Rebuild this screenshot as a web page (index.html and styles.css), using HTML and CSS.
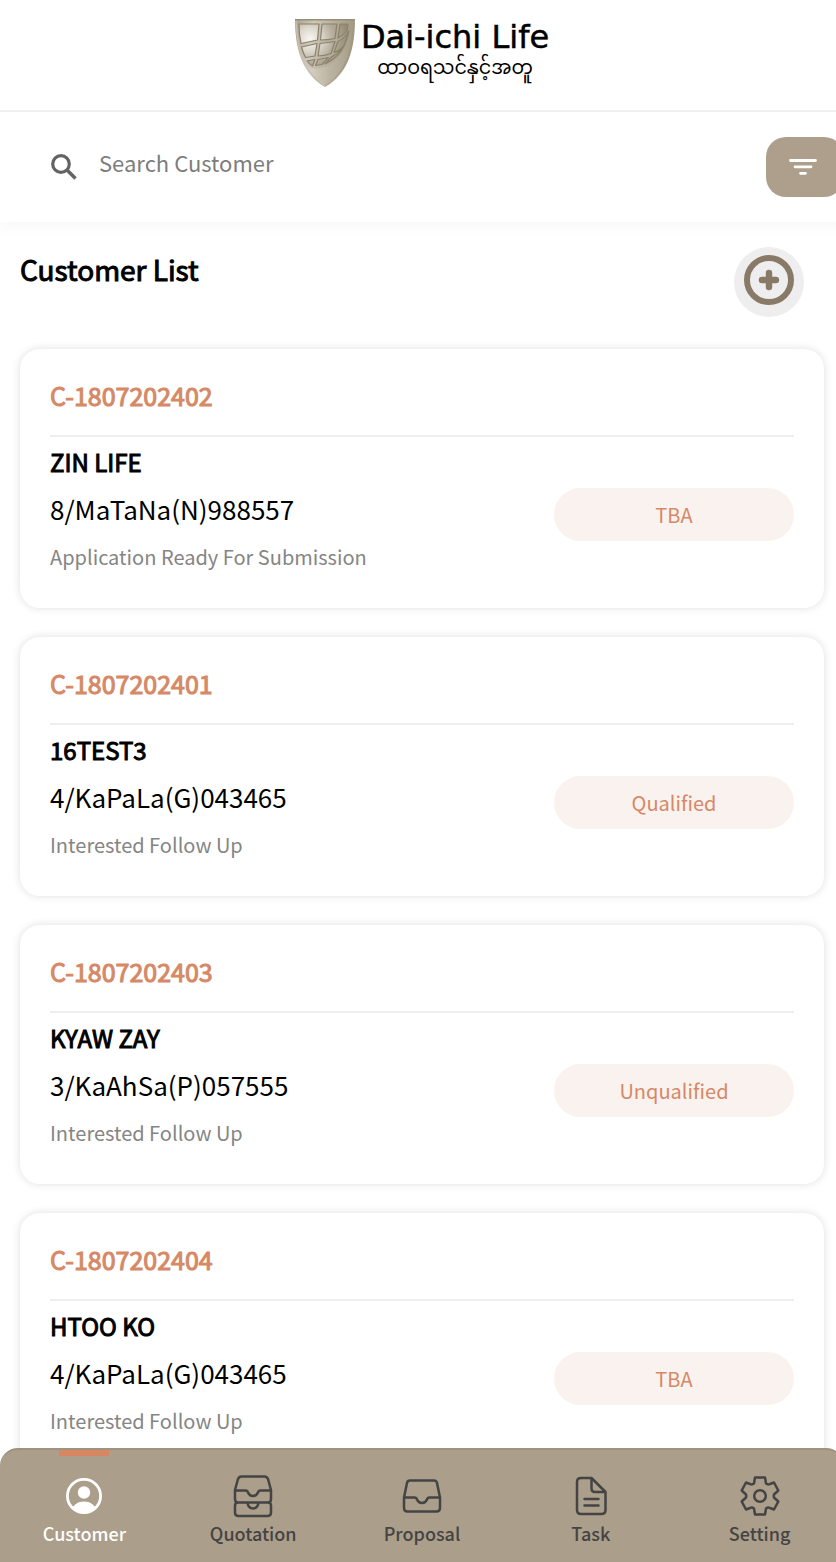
FILE: index.html
```html
<!DOCTYPE html>
<html lang="en">
<head>
<meta charset="utf-8">
<meta name="viewport" content="width=device-width, initial-scale=1">
<title>Customer List</title>
<link rel="stylesheet" href="styles.css">
</head>
<body>
<div class="app">
  <header class="brand">
    <svg class="brand-shield" viewBox="0 0 60 68" aria-hidden="true">
      <defs>
        <linearGradient id="metal" x1="0" y1="0" x2="1" y2="0.2">
          <stop offset="0" stop-color="#aaa18d"/>
          <stop offset="0.3" stop-color="#cec8bb"/>
          <stop offset="0.6" stop-color="#b9b1a0"/>
          <stop offset="1" stop-color="#a09780"/>
        </linearGradient>
        <radialGradient id="shine" gradientUnits="userSpaceOnUse" cx="15" cy="20" r="38">
          <stop offset="0" stop-color="#f8f6f2"/>
          <stop offset="0.3" stop-color="#ded9cf"/>
          <stop offset="0.6" stop-color="#b7af9d"/>
          <stop offset="1" stop-color="#958b74"/>
        </radialGradient>
        <linearGradient id="sweep" x1="0" y1="0" x2="1" y2="0">
          <stop offset="0" stop-color="#dcd7cc"/>
          <stop offset="0.5" stop-color="#bdb5a4"/>
          <stop offset="1" stop-color="#a89f8a"/>
        </linearGradient>
      </defs>
      <path d="M0 0H60C60 30 53 55 30 68C7 55 0 30 0 0Z" fill="url(#metal)"/>
      <path d="M57 8C56 32 50 54 30 66C20 60 14 54 10 47Q22 53 34 46Q50 37 57 8Z" fill="url(#sweep)"/>
      <path d="M4 5H24L22.500 21L6 24.500Q4 16 4 5ZM27 5H42L40 19.500Q33 21 25.500 21ZM45 5H53L52 12Q48 17 43 19ZM6.500 28L22 24.500L20 37L10.500 38.500Q8 34 6.500 28ZM25 24.500L40 22.500L36 34.500Q30 37 23 37ZM43 22.500Q49 20 54 12Q52 20 49 27Q44 32 39 33.500ZM12 42L20 40.500L17.500 47Q14.500 45.500 12 42ZM23 40.500L33.500 38.500L27 45.500L20.500 46.500ZM37 37.500Q44 34 49 27Q44 38 30 45Z" fill="url(#shine)" stroke="#8b826b" stroke-width="1.200" stroke-linejoin="round"/>
      <path d="M1 1C2 31 9 54 30 66.500" fill="none" stroke="#c9c2b4" stroke-width="1.200"/>
      <path d="M0 .8H60" stroke="#978e78" stroke-width="1.400"/>
    </svg>
    <div class="brand-words">
      <span class="brand-name">Dai-ichi Life</span>
      <span class="brand-tagline" lang="my">ထာဝရသင်နှင့်အတူ</span>
    </div>
  </header>

  <form class="search" role="search">
    <label class="search-field">
      <svg class="search-icon" viewBox="0 0 26 26" role="img" aria-label="Search"><circle cx="10" cy="10" r="8.300" fill="none" stroke="#636363" stroke-width="3.200"/><path d="M16 16L24.500 24.500" stroke="#636363" stroke-width="3.600"/></svg>
      <input class="search-input" type="search" placeholder="Search Customer">
    </label>
    <button class="filter" type="button" aria-label="Filter">
      <svg class="filter-icon" viewBox="0 0 28 18" aria-hidden="true"><path d="M1.500 2.500H26.500M6 8.800H22M11.500 15.300H16.500" stroke="#fff" stroke-width="2.800" stroke-linecap="round"/></svg>
    </button>
  </form>

  <main class="content">
    <div class="heading">
      <h1 class="heading-title">Customer List</h1>
      <button class="add" type="button" aria-label="Add customer">
        <svg class="add-icon" viewBox="0 0 50 50" aria-hidden="true"><circle cx="25" cy="25" r="22" fill="none" stroke="#887a67" stroke-width="6"/><path d="M18 25H32M25 18V32" stroke="#887a67" stroke-width="6.400" stroke-linecap="round"/></svg>
      </button>
    </div>

    <div class="cards">
      <article class="card">
        <h2 class="card-id">C-1807202402</h2>
        <div class="card-body">
          <div class="card-info">
            <h3 class="card-name">ZIN LIFE</h3>
            <p class="card-nrc">8/MaTaNa(N)988557</p>
            <p class="card-note">Application Ready For Submission</p>
          </div>
          <span class="status">TBA</span>
        </div>
      </article>
      <article class="card">
        <h2 class="card-id">C-1807202401</h2>
        <div class="card-body">
          <div class="card-info">
            <h3 class="card-name">16TEST3</h3>
            <p class="card-nrc">4/KaPaLa(G)043465</p>
            <p class="card-note">Interested Follow Up</p>
          </div>
          <span class="status">Qualified</span>
        </div>
      </article>
      <article class="card">
        <h2 class="card-id">C-1807202403</h2>
        <div class="card-body">
          <div class="card-info">
            <h3 class="card-name">KYAW ZAY</h3>
            <p class="card-nrc">3/KaAhSa(P)057555</p>
            <p class="card-note">Interested Follow Up</p>
          </div>
          <span class="status">Unqualified</span>
        </div>
      </article>
      <article class="card">
        <h2 class="card-id">C-1807202404</h2>
        <div class="card-body">
          <div class="card-info">
            <h3 class="card-name">HTOO KO</h3>
            <p class="card-nrc">4/KaPaLa(G)043465</p>
            <p class="card-note">Interested Follow Up</p>
          </div>
          <span class="status">TBA</span>
        </div>
      </article>
    </div>
  </main>
</div>

<nav class="tabs">
  <a class="tab tab-active" href="#customer">
    <svg class="tab-icon" viewBox="0 0 44 44" aria-hidden="true"><defs><clipPath id="face"><circle cx="22" cy="22" r="17"/></clipPath></defs><circle cx="22" cy="22" r="16.600" fill="none" stroke="currentColor" stroke-width="2.800"/><circle cx="22" cy="18.500" r="6.200" fill="currentColor"/><path d="M9 37Q12 27.500 22 27.500T35 37V42H9Z" fill="currentColor" clip-path="url(#face)"/></svg>
    Customer
  </a>
  <a class="tab" href="#quotation">
    <svg class="tab-icon" viewBox="0 0 44 44" aria-hidden="true"><g fill="none" stroke="currentColor" stroke-width="2.500" stroke-linejoin="round"><path d="M4 16L7 5Q8 2.400 10.500 2.400H33.500Q36 2.400 37 5L40 16V25Q40 28.500 37 28.500H7Q4 28.500 4 25ZM4 16.500H14.500Q16.500 16.500 17 18.500Q18.500 22 22 22T27 18.500Q27.500 16.500 29.500 16.500H40"/><path d="M7 28.500Q4 28.500 4 31.500V38.500Q4 42 7.500 42H36.500Q40 42 40 38.500V31.500Q40 28.500 37 28.500M16.500 29Q17.500 34.500 22 34.500T27.500 29"/></g></svg>
    Quotation
  </a>
  <a class="tab" href="#proposal">
    <svg class="tab-icon" viewBox="0 0 44 44" aria-hidden="true"><path d="M4 23.500L7 9Q7.500 6.500 10 6.500H34Q36.500 6.500 37 9L40 23.500V33.500Q40 37.500 36.500 37.500H7.500Q4 37.500 4 33.500ZM4 23.500H14.500Q16.500 23.500 17 25.500Q18.500 29 22 29T27 25.500Q27.500 23.500 29.500 23.500H40" fill="none" stroke="currentColor" stroke-width="2.500" stroke-linejoin="round"/></svg>
    Proposal
  </a>
  <a class="tab" href="#task">
    <svg class="tab-icon" viewBox="0 0 44 44" aria-hidden="true"><path d="M22.500 4H12Q8 4 8 8V36Q8 40 12 40H32.500Q36.500 40 36.500 36V18ZM22.500 4V14.500Q22.500 18 26 18H36.500M15.500 25H29.500M15.500 31.500H29.500" fill="none" stroke="currentColor" stroke-width="2.500" stroke-linejoin="round" stroke-linecap="round"/></svg>
    Task
  </a>
  <a class="tab" href="#setting">
    <svg class="tab-icon" viewBox="0 0 44 44" aria-hidden="true"><path d="M17 3.500H27L28 9.500Q30 11 32 10L36 8.500L40.300 16.500L36 20.500Q35.500 22 36 23.500L40.300 27.500L36 35.500L32 34Q30 33 28 34.500L27 40.500H17L16 34.500Q14 33 12 34L8 35.500L3.700 27.500L8 23.500Q8.500 22 8 20.500L3.700 16.500L8 8.500L12 10Q14 11 16 9.500Z" fill="none" stroke="currentColor" stroke-width="2.500" stroke-linejoin="round"/><circle cx="22" cy="22" r="5.800" fill="none" stroke="currentColor" stroke-width="2.500"/></svg>
    Setting
  </a>
</nav>
</body>
</html>
```
FILE: styles.css
```css
* { box-sizing: border-box; }

html { overflow-x: hidden; }

body {
  margin: 0;
  overflow-x: hidden;
  background: #fff;
  color: #000;
  font-family: "Noto Sans CJK JP", "Noto Sans CJK SC", sans-serif;
}

h1, h2, h3, p { margin: 0; }

/* The layout runs slightly wider than the window. */
.app, .tabs { width: calc(100% + 8px); }

.app { padding-bottom: 80px; }

.brand {
  display: flex;
  justify-content: center;
  gap: 6px;
  height: 112px;
  padding-top: 19px;
  border-bottom: 2px solid #f0f0f0;
}

.brand-shield { width: 60px; height: 68px; }

.brand-words {
  display: flex;
  flex-direction: column;
  align-items: center;
}

.brand-name {
  font-family: "DejaVu Sans", sans-serif;
  font-size: 32px;
  line-height: 36px;
  -webkit-text-stroke: 0.5px currentColor;
}

.brand-tagline {
  font-family: "Noto Sans Myanmar", "Noto Sans", sans-serif;
  font-size: 19px;
  line-height: 30px;
}

.search {
  display: flex;
  align-items: center;
  gap: 20px;
  height: 110px;
  padding-left: 51px;
  box-shadow: 0 6px 14px rgba(0, 0, 0, .03);
}

.search-field {
  display: flex;
  flex: 1;
  align-items: center;
  gap: 22px;
}

.search-icon { width: 26px; height: 26px; }

.search-input {
  flex: 1;
  min-width: 0;
  padding: 0 0 10px;
  border: 0;
  outline: 0;
  background: none;
  font: 400 22px/34px "Noto Sans CJK JP", sans-serif;
}

.search-input::placeholder { color: #7d7d7d; opacity: 1; }

.filter {
  display: grid;
  place-items: center;
  width: 78px;
  height: 60px;
  padding: 0 4px 0 0;
  border: 0;
  border-radius: 20px;
  background: #ad9f8b;
}

.filter-icon { width: 28px; height: 18px; }

.content { padding: 25px 20px 0; }

.heading {
  display: flex;
  justify-content: space-between;
  padding-right: 20px;
}

.heading-title, .card-id, .card-name {
  font-weight: 400;
  -webkit-text-stroke: 1px currentColor;
}

.heading-title {
  font-size: 28px;
  line-height: 44px;
}

.add {
  display: grid;
  justify-items: center;
  width: 70px;
  height: 70px;
  padding: 8px 0 0;
  border: 0;
  border-radius: 50%;
  background: #eee;
}

.add-icon { width: 50px; height: 50px; }

.cards {
  display: grid;
  gap: 29px;
  padding-top: 32px;
}

.card {
  padding: 30px 30px 27px;
  border-radius: 20px;
  background: #fff;
  box-shadow: 0 0 8px rgba(0, 0, 0, .13);
}

.card-id {
  padding-bottom: 24px;
  border-bottom: 2px solid #eee;
  color: #d58966;
  font-size: 25px;
  line-height: 32px;
}

.card-body {
  display: flex;
  align-items: center;
  justify-content: space-between;
  padding-top: 2px;
}

.card-name {
  font-size: 24px;
  line-height: 46px;
}

.card-nrc {
  font-size: 26px;
  line-height: 48px;
}

.card-note {
  color: #858585;
  font-size: 20px;
  line-height: 48px;
}

.status {
  width: 240px;
  height: 53px;
  margin-top: 8px;
  border-radius: 27px;
  background: #faf2ef;
  color: #d58966;
  font-size: 20px;
  line-height: 53px;
  text-align: center;
}

.tabs {
  position: fixed;
  bottom: 0;
  left: 0;
  display: grid;
  grid-template-columns: repeat(5, 1fr);
  border-top: 2px solid #9f917f;
  border-radius: 18px 18px 0 0;
  background: #ab9e8a;
}

.tab {
  position: relative;
  display: flex;
  flex-direction: column;
  align-items: center;
  padding: 24px 0 14px;
  color: #444;
  font-size: 18px;
  font-weight: 500;
  line-height: 30px;
  text-decoration: none;
}

.tab-active { color: #fff; }

.tab-active::before {
  position: absolute;
  top: 0;
  left: 35%;
  width: 50px;
  height: 6px;
  background: #d68762;
  content: "";
}

.tab-icon { width: 44px; height: 44px; }
```
